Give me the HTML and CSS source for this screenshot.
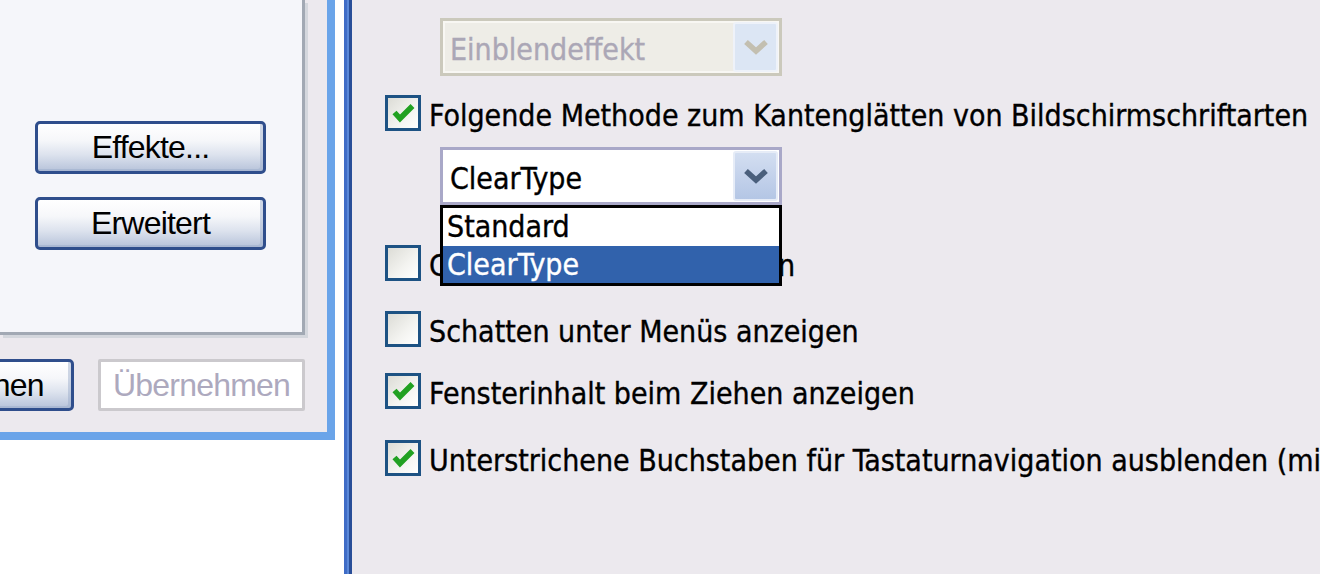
FILE: index.html
```html
<!DOCTYPE html>
<html lang="de">
<head>
<meta charset="utf-8">
<title>Effekte</title>
<link rel="stylesheet" href="styles.css">
</head>
<body>
<div class="screen">
  <div class="left-pane">
    <div class="dialog">
      <div class="panel">
        <button class="xp-btn wide">Effekte...</button>
        <button class="xp-btn wide">Erweitert</button>
      </div>
      <div class="dialog-buttons">
        <button class="xp-btn">OK</button>
        <button class="xp-btn">Abbrechen</button>
        <button class="xp-btn disabled">Übernehmen</button>
      </div>
    </div>
  </div>
  <div class="frame-edge"></div>
  <div class="right-pane">
    <div class="combo combo-disabled">
      <span class="combo-text">Einblendeffekt</span>
      <span class="combo-btn">
        <svg width="28" height="18" viewBox="0 0 28 18"><path d="M4 4 L14 13 L24 4" fill="none" stroke="#C3BFB0" stroke-width="5.5"/></svg>
      </span>
    </div>
    <div class="option row-1">
      <span class="checkbox"><svg width="30" height="30" viewBox="0 0 30 30"><path d="M6.5 14.5 L12 20.5 L24.5 8" fill="none" stroke="#21A121" stroke-width="5.5"/></svg></span>
      <span class="label">Folgende Methode zum Kantenglätten von Bildschirmschriftarten</span>
    </div>
    <div class="combo combo-open">
      <span class="combo-text">ClearType</span>
      <span class="combo-btn">
        <svg width="28" height="18" viewBox="0 0 28 18"><path d="M4 4 L14 13 L24 4" fill="none" stroke="#4A5F7C" stroke-width="5.5"/></svg>
      </span>
      <div class="dropdown">
        <div class="dropdown-item">Standard</div>
        <div class="dropdown-item selected">ClearType</div>
      </div>
    </div>
    <div class="option row-2">
      <span class="checkbox"></span>
      <span class="label">Große Symbole verwenden</span>
    </div>
    <div class="option row-3">
      <span class="checkbox"></span>
      <span class="label">Schatten unter Menüs anzeigen</span>
    </div>
    <div class="option row-4">
      <span class="checkbox"><svg width="30" height="30" viewBox="0 0 30 30"><path d="M6.5 14.5 L12 20.5 L24.5 8" fill="none" stroke="#21A121" stroke-width="5.5"/></svg></span>
      <span class="label">Fensterinhalt beim Ziehen anzeigen</span>
    </div>
    <div class="option row-5">
      <span class="checkbox"><svg width="30" height="30" viewBox="0 0 30 30"><path d="M6.5 14.5 L12 20.5 L24.5 8" fill="none" stroke="#21A121" stroke-width="5.5"/></svg></span>
      <span class="label">Unterstrichene Buchstaben für Tastaturnavigation ausblenden (mit Alt-Taste einblenden)</span>
    </div>
  </div>
</div>
</body>
</html>
```
FILE: styles.css
```css
html, body {
  margin: 0;
  padding: 0;
}
body {
  width: 1320px;
  height: 574px;
  overflow: hidden;
  background: #ffffff;
  font-family: "DejaVu Sans Condensed", "DejaVu Sans", sans-serif;
}
.screen {
  display: flex;
  height: 574px;
}
.left-pane {
  flex: none;
  width: 344px;
  height: 574px;
  background: #ffffff;
  overflow: hidden;
}
.dialog {
  width: 327px;
  height: 432px;
  background: #ECE9EE;
  border-right: 8px solid #6AA4E9;
  border-bottom: 8px solid #6AA4E9;
  display: flex;
  flex-direction: column;
}
.panel {
  box-sizing: border-box;
  width: 305px;
  height: 335px;
  background: #F5F6FA;
  border-right: 3px solid #A2A9B4;
  border-bottom: 3px solid #A2A9B4;
  box-shadow: 3px 3px 0 #D4D7DD;
  display: flex;
  flex-direction: column;
  align-items: flex-end;
  gap: 23px;
  padding: 121px 36px 0 0;
}
.dialog-buttons {
  display: flex;
  justify-content: flex-end;
  gap: 24px;
  padding-right: 22px;
  margin-top: 24px;
}
.xp-btn {
  flex: none;
  box-sizing: border-box;
  width: 208px;
  height: 52px;
  padding: 0;
  border: 3px solid #2F4E8C;
  border-radius: 5px;
  background: linear-gradient(#FFFFFF 0%, #F6F7FA 35%, #DDE3EE 65%, #B7C3DA 100%);
  box-shadow: inset -3px -2px 0 rgba(150, 168, 200, 0.45);
  font-family: "Liberation Sans", Arial, sans-serif;
  font-size: 32px;
  letter-spacing: -0.8px;
  color: #000000;
}
.xp-btn.wide {
  width: 231px;
  height: 53px;
}
.xp-btn.disabled {
  width: 207px;
  border-color: #CBC9CD;
  border-radius: 2px;
  background: #ffffff;
  box-shadow: none;
  color: #ADA9BE;
}
.frame-edge {
  flex: none;
  width: 8px;
  background: linear-gradient(to right, #3F6CC6 0 3px, #5A88D8 3px 5px, #294E98 5px 8px);
}
.right-pane {
  flex: 1;
  min-width: 0;
  background: #ECE9EE;
  padding: 18px 0 0 33px;
  display: flex;
  flex-direction: column;
  align-items: flex-start;
  white-space: nowrap;
  overflow: hidden;
  font-size: 30px;
  color: #000000;
  -webkit-text-stroke: 0.35px currentColor;
}
.combo {
  position: relative;
  flex: none;
  box-sizing: border-box;
  width: 342px;
  height: 58px;
  margin-left: 55px;
  border: 3px solid #A9A8C8;
  background: #ffffff;
  display: flex;
  align-items: center;
}
.combo-text {
  flex: 1;
  padding: 5px 0 0 7px;
  line-height: 47px;
}
.combo-btn {
  flex: none;
  box-sizing: border-box;
  width: 45px;
  height: 50px;
  margin-right: 1px;
  border: 2px solid #E6ECF7;
  border-radius: 3px;
  background: linear-gradient(#D3DEF1, #B4C6E5);
  display: flex;
  align-items: center;
  justify-content: center;
}
.combo-disabled {
  border-color: #CBC9BC;
  background: #EEEDE7;
  box-shadow: inset 0 0 0 2px #F8F7F3;
}
.combo-disabled .combo-text {
  color: #ABA7B6;
}
.combo-disabled .combo-btn {
  border-color: #EEF2F9;
  background: #DCE6F4;
}
.row-1 { margin-top: 19px; }
.combo-open { margin-top: 16px; }
.row-2 { margin-top: 40px; }
.row-3 { margin-top: 30px; }
.row-4 { margin-top: 26px; }
.row-5 { margin-top: 31px; }
.dropdown {
  position: absolute;
  top: calc(100% + 3px);
  left: -3px;
  z-index: 2;
  box-sizing: border-box;
  width: 342px;
  border: 3px solid #000000;
  background: #ffffff;
}
.dropdown-item {
  height: 38px;
  line-height: 38px;
  padding-left: 4px;
}
.dropdown-item.selected {
  height: 37px;
  line-height: 37px;
  background: #3162AC;
  color: #ffffff;
}
.option {
  display: flex;
  align-items: flex-start;
  gap: 8px;
  height: 36px;
}
.checkbox {
  flex: none;
  box-sizing: border-box;
  width: 36px;
  height: 36px;
  border: 3px solid #1D5283;
  background: linear-gradient(135deg, #DCDCD6 0%, #F4F4F1 60%, #FFFFFF 100%);
}
.checkbox svg {
  display: block;
}
.label {
  line-height: 36px;
  margin-top: 3px;
}
```
